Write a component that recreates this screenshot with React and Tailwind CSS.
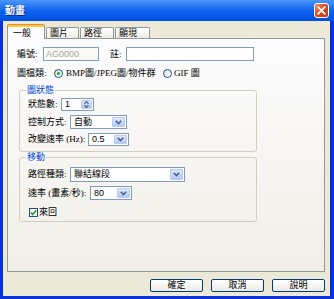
import React from "react";

const SERIF = "font-['Liberation_Serif','Noto_Sans_CJK_TC',serif]";
const SANS = "font-['Liberation_Sans','Noto_Sans_CJK_TC',sans-serif]";

function Arrow() {
  return (
    <div className="h-full w-[13px] flex items-center justify-center bg-gradient-to-b from-[#DCE7FD] to-[#B4C8F5] border border-[#B9CBF3] rounded-[1px]">
      <svg width="7" height="5" viewBox="0 0 7 5">
        <path d="M0.8 0.8 L3.5 3.6 L6.2 0.8" fill="none" stroke="#4D6185" strokeWidth="1.6" />
      </svg>
    </div>
  );
}

function Select({ className, value }) {
  return (
    <div className={`flex items-center bg-white border border-[#7F9DB9] h-[14px] p-[1px] ${className}`}>
      <span className={`flex-1 pl-[2px] leading-none text-[9px] ${SANS} whitespace-nowrap`}>{value}</span>
      <Arrow />
    </div>
  );
}

function Button({ children }) {
  return (
    <div className="w-[53px] h-[13px] flex items-center justify-center border border-[#003C74] rounded-[2px] bg-gradient-to-b from-[#FFFFFF] to-[#ECEBE6] text-[9px] leading-none">
      {children}
    </div>
  );
}

export default function App() {
  return (
    <div className={`w-[334px] h-[299px] flex flex-col bg-[#0831D9] text-black ${SERIF}`}>
      {/* title bar */}
      <div className="h-[21px] flex items-center justify-between pl-[5px] pr-[5px] bg-gradient-to-b from-[#4A96FA] via-[#0E62EE] to-[#0050DE]">
        <span className={`text-white font-bold text-[10px] leading-none [text-shadow:1px_1px_0_#0A1E8C] ${SANS}`}>動畫</span>
        <div className="w-[15px] h-[15px] rounded-[3px] border border-white bg-gradient-to-br from-[#EE8B6E] via-[#D9491F] to-[#C23510] flex items-center justify-center">
          <svg width="9" height="9" viewBox="0 0 9 9">
            <path d="M1.2 1.2 L7.8 7.8 M7.8 1.2 L1.2 7.8" stroke="white" strokeWidth="1.8" strokeLinecap="round" />
          </svg>
        </div>
      </div>

      {/* body */}
      <div className="flex-1 ml-[3px] mr-[4px] mb-[3px] bg-[#ECE9D8] pl-[4px] pr-[5px] pt-[3px] flex flex-col">
        {/* tabs */}
        <div className="flex items-end h-[15px] relative z-10 text-[9px] leading-none">
          <div className="w-[38px] h-[15px] border-x border-[#919B9C] bg-[#FCFCFE] flex flex-col rounded-t-[2px] overflow-hidden">
            <div className="h-[1px] bg-[#E68B2C]" />
            <div className="h-[2px] bg-[#FFC83C]" />
            <div className="flex-1 flex items-center pl-[5px]">一般</div>
          </div>
          <div className="w-[33px] h-[11px] mb-[1px] ml-[1px] border border-b-0 border-[#919B9C] rounded-t-[2px] bg-gradient-to-b from-white to-[#ECEBE6] flex items-center pl-[3px]">圖片</div>
          <div className="w-[34px] h-[11px] mb-[1px] ml-[1px] border border-b-0 border-[#919B9C] rounded-t-[2px] bg-gradient-to-b from-white to-[#ECEBE6] flex items-center pl-[3px]">路徑</div>
          <div className="w-[35px] h-[11px] mb-[1px] ml-[1px] border border-b-0 border-[#919B9C] rounded-t-[2px] bg-gradient-to-b from-white to-[#ECEBE6] flex items-center pl-[3px]">顯現</div>
        </div>

        {/* panel */}
        <div className="-mt-[1px] w-[318px] h-[234px] border border-[#919B9C] bg-gradient-to-b from-[#FCFCFE] to-[#F1EFE7] pl-[9px] pt-[8px] flex flex-col text-[9px] leading-none">
          {/* row 1 */}
          <div className="flex items-center h-[14px]">
            <span className="w-[26px] whitespace-nowrap">編號:</span>
            <div className={`w-[56px] h-[14px] border border-[#7F9DB9] bg-[#F9F9F6] flex items-center pl-[2px] text-[#ACA899] ${SANS}`}>AG0000</div>
            <span className="ml-[11px] w-[16px] whitespace-nowrap">註:</span>
            <div className="w-[128px] h-[14px] border border-[#7F9DB9] bg-white" />
          </div>

          {/* row 2 */}
          <div className="flex items-center h-[14px] mt-[5px]">
            <span className="w-[37px] whitespace-nowrap">圖檔類:</span>
            <div className="w-[9px] h-[9px] rounded-full border border-[#1C5180] bg-gradient-to-br from-[#DCDCD6] to-white flex items-center justify-center">
              <div className="w-[3px] h-[3px] rounded-full bg-[#21A121]" />
            </div>
            <span className="ml-[3px] w-[97px] whitespace-nowrap">BMP圖/JPEG圖/物件群</span>
            <div className="w-[9px] h-[9px] rounded-full border border-[#1C5180] bg-gradient-to-br from-[#DCDCD6] to-white" />
            <span className="ml-[2px] whitespace-nowrap">GIF 圖</span>
          </div>

          {/* group 1 */}
          <div className="relative mt-[10px] ml-[2px] w-[238px] h-[62px] border border-[#D0D0BF] rounded-[3px] pt-[7px] pl-[8px] flex flex-col">
            <span className="absolute -top-[5px] left-[6px] px-[1px] bg-[#FAFAF8] text-[#0046D5] leading-none">圖狀態</span>
            <div className="flex items-center h-[13px]">
              <span className="w-[33px] whitespace-nowrap">狀態數:</span>
              <div className="w-[33px] h-[13px] border border-[#7F9DB9] bg-white flex items-center p-[1px]">
                <span className={`flex-1 pl-[2px] ${SANS}`}>1</span>
                <div className="h-full w-[11px] flex flex-col items-center justify-center gap-[1px] bg-gradient-to-b from-[#DCE7FD] to-[#B4C8F5] border border-[#B9CBF3] rounded-[1px]">
                  <svg width="5" height="3" viewBox="0 0 5 3"><path d="M0.5 2.7 L2.5 0.6 L4.5 2.7" fill="none" stroke="#4D6185" strokeWidth="1.2" /></svg>
                  <svg width="5" height="3" viewBox="0 0 5 3"><path d="M0.5 0.3 L2.5 2.4 L4.5 0.3" fill="none" stroke="#4D6185" strokeWidth="1.2" /></svg>
                </div>
              </div>
            </div>
            <div className="flex items-center h-[14px] mt-[4px]">
              <span className="w-[42px] whitespace-nowrap">控制方式:</span>
              <Select className="w-[57px]" value="自動" />
            </div>
            <div className="flex items-center h-[13px] mt-[4px]">
              <span className="w-[60px] whitespace-nowrap">改變速率 (Hz):</span>
              <Select className="w-[41px] !h-[13px]" value="0.5" />
            </div>
          </div>

          {/* group 2 */}
          <div className="relative mt-[5px] ml-[2px] w-[238px] h-[65px] border border-[#D0D0BF] rounded-[3px] pt-[9px] pl-[8px] flex flex-col">
            <span className="absolute -top-[5px] left-[6px] px-[1px] bg-[#F9F9F6] text-[#0046D5] leading-none">移動</span>
            <div className="flex items-center h-[15px]">
              <span className="w-[42px] whitespace-nowrap">路徑種類:</span>
              <Select className="w-[115px] !h-[15px]" value="聯結線段" />
            </div>
            <div className="flex items-center h-[14px] mt-[4px]">
              <span className="w-[62px] whitespace-nowrap">速率 (畫素/秒):</span>
              <Select className="w-[42px]" value="80" />
            </div>
            <div className="flex items-center h-[10px] mt-[7px] pl-[1px]">
              <div className="w-[9px] h-[9px] border border-[#1C5180] bg-white flex items-center justify-center">
                <svg width="7" height="7" viewBox="0 0 7 7"><path d="M0.8 3.5 L2.7 5.5 L6.3 1.2" fill="none" stroke="#21A121" strokeWidth="1.6" /></svg>
              </div>
              <span className="ml-[1px] whitespace-nowrap">來回</span>
            </div>
          </div>
        </div>

        {/* buttons */}
        <div className="flex justify-end gap-[8px] mt-[7px]">
          <Button>確定</Button>
          <Button>取消</Button>
          <Button>說明</Button>
        </div>
      </div>
    </div>
  );
}
